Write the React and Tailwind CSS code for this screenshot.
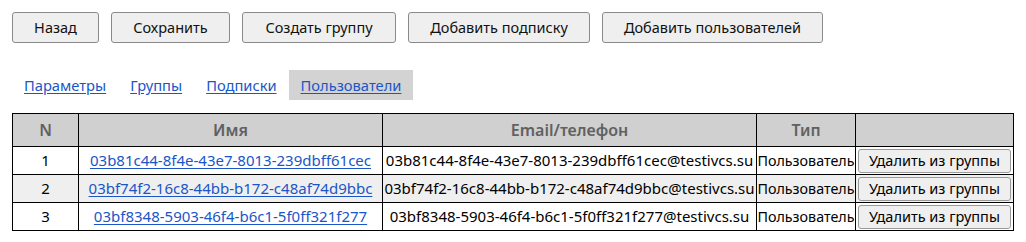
import { useState } from 'react';

const actions = [
  { label: 'Назад', w: 'w-[87px]' },
  { label: 'Сохранить', w: 'w-[119px]' },
  { label: 'Создать группу', w: 'w-[154px]' },
  { label: 'Добавить подписку', w: 'w-[182px]' },
  { label: 'Добавить пользователей', w: 'w-[221px]' },
];
const tabs = ['Параметры', 'Группы', 'Подписки', 'Пользователи'];

const users = [
  { n: 1, id: '03b81c44-8f4e-43e7-8013-239dbff61cec' },
  { n: 2, id: '03bf74f2-16c8-44bb-b172-c48af74d9bbc' },
  { n: 3, id: '03bf8348-5903-46f4-b6c1-5f0ff321f277' },
];

export default function App() {
  const [active, setActive] = useState('Пользователи');

  return (
    <div className="p-3 text-[14px] text-black" style={{ fontFamily: '"Noto Sans", "Open Sans", sans-serif' }}>
      <div className="flex gap-3">
        {actions.map((a) => (
          <button
            key={a.label}
            type="button"
            className={`${a.w} h-[31px] rounded-[3px] border border-[#8a8a8a] bg-[#efefef] text-[14.5px] text-[#111]`}
          >
            {a.label}
          </button>
        ))}
      </div>

      <div className="flex mt-[27px]">
        {tabs.map((tab) => (
          <button
            key={tab}
            type="button"
            onClick={() => setActive(tab)}
            className={`h-[30px] px-[12px] text-[14.7px] text-[#1a56c8] underline underline-offset-2 ${
              active === tab ? 'bg-[#d3d3d3]' : ''
            }`}
          >
            {tab}
          </button>
        ))}
      </div>

      <table className="mt-[13px] border-collapse table-fixed w-[1001px] text-[15px]">
        <colgroup>
          <col className="w-[66px]" />
          <col className="w-[304px]" />
          <col className="w-[374px]" />
          <col className="w-[99px]" />
          <col className="w-[158px]" />
        </colgroup>
        <thead>
          <tr className="h-[33px] bg-[#d0d0d0] text-[#616161] text-[16px]">
            <th className="border border-black font-semibold">N</th>
            <th className="border border-black font-semibold">Имя</th>
            <th className="border border-black font-semibold">Email/телефон</th>
            <th className="border border-black font-semibold">Тип</th>
            <th className="border border-black"></th>
          </tr>
        </thead>
        <tbody>
          {users.map((u, i) => (
            <tr key={u.id} className={`h-[28px] ${i % 2 === 1 ? 'bg-[#efefef]' : 'bg-white'}`}>
              <td className="border border-black text-center">{u.n}</td>
              <td className="border border-black text-center whitespace-nowrap">
                <a href="#" className="text-[#1a56c8] underline underline-offset-2">
                  {u.id}
                </a>
              </td>
              <td className="border border-black text-center whitespace-nowrap">{u.id}@testivcs.su</td>
              <td className="border border-black text-center whitespace-nowrap text-[14.3px]">Пользователь</td>
              <td className="border border-black px-[2px] py-[1px]">
                <button
                  type="button"
                  className="w-full h-[24px] rounded-[3px] border border-[#9a9a9a] bg-[#efefef] text-[14.5px]"
                >
                  Удалить из группы
                </button>
              </td>
            </tr>
          ))}
        </tbody>
      </table>
    </div>
  );
}
